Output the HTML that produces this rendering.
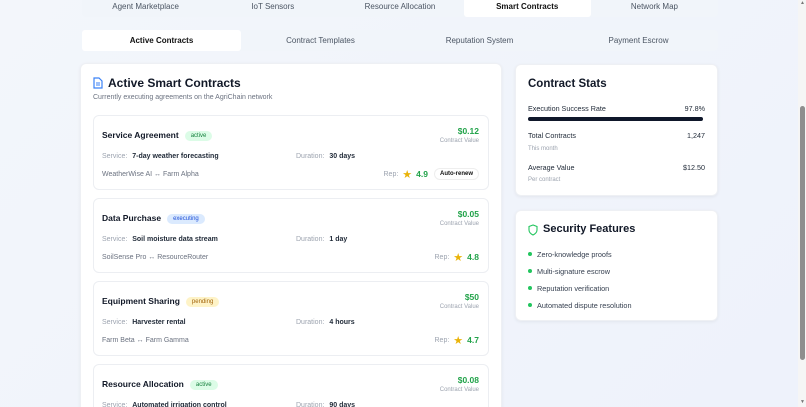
<!DOCTYPE html>
<html style="width:806px;height:407px;overflow:hidden"><head><meta charset="utf-8"><style>
*{box-sizing:border-box;margin:0;padding:0}
body{width:806px;height:407px;overflow:hidden;font-family:"Liberation Sans",sans-serif;background:linear-gradient(135deg,#f3f6fb,#eef2fb);position:relative;color:#111827}
.abs{position:absolute}
.tabs{position:absolute;left:82px;width:636px;background:#f1f5fa;display:flex;border-radius:4px}
.tabs div{flex:1;text-align:center;font-size:8px;color:#4b5563;border-radius:3px}
.tabs div.on{background:#fff;color:#111;font-weight:600}
.card{position:absolute;background:#fff;border-radius:6px;box-shadow:0 1px 3px rgba(0,0,0,.06);border:1px solid #eef0f4}
.cc{position:absolute;left:93px;width:396px;height:75px;background:#fff;border:1px solid #eceef2;border-radius:6px}
.cc .t{position:absolute;left:8px;top:14px;font-size:8.5px;font-weight:600}
.badge{display:inline-block;font-size:6px;padding:2px 6px;border-radius:8px;margin-left:6px;vertical-align:1px;font-weight:500}
.b-a{background:#dcfce7;color:#15803d}.b-e{background:#dbeafe;color:#1d4ed8}.b-p{background:#fef3c7;color:#a16207}
.cc .v{position:absolute;right:9px;top:10px;font-size:8.5px;font-weight:700;color:#22a34a;text-align:right}
.cc .v span{display:block;font-size:6px;color:#9ca3af;font-weight:400;margin-top:2px}
.cc .s{position:absolute;left:8px;top:37px;font-size:7px;color:#9ca3af}
.cc .s b{color:#1f2937;margin-left:3px}
.cc .d{position:absolute;left:202px;top:37px;font-size:7px;color:#9ca3af}
.cc .d b{color:#1f2937;margin-left:3px}
.cc .p{position:absolute;left:8px;top:55px;font-size:7px;color:#6b7280}
.cc .r{position:absolute;right:9px;top:51px;font-size:7px;color:#9ca3af;display:flex;align-items:center;gap:4px;height:14px}
.cc .r .n{color:#22a34a;font-weight:600;font-size:8.5px}
.star{color:#eab308;font-size:11px}
.ar{border:1px solid #eee;border-radius:7px;padding:2px 5px;color:#111;font-weight:600;font-size:6px;margin-left:2px}
.row{position:absolute;left:12px;right:12px;font-size:7.2px;color:#1f2937;display:flex;justify-content:space-between}
.sub{position:absolute;left:12px;font-size:6px;color:#9ca3af}
.li{position:absolute;left:12px;font-size:7.3px;color:#374151}
.li:before{content:"";display:inline-block;width:4px;height:4px;border-radius:50%;background:#22c55e;margin-right:5px;vertical-align:1px}
</style></head><body>
<div class="tabs" style="top:-4px;height:21px;padding:0"><div style="line-height:22px">Agent Marketplace</div><div style="line-height:22px">IoT Sensors</div><div style="line-height:22px">Resource Allocation</div><div class="on" style="line-height:22px">Smart Contracts</div><div style="line-height:22px">Network Map</div></div>
<div class="tabs" style="top:30px;height:21px"><div class="on" style="line-height:21px">Active Contracts</div><div style="line-height:21px">Contract Templates</div><div style="line-height:21px">Reputation System</div><div style="line-height:21px">Payment Escrow</div></div>

<div class="card" style="left:80px;top:63px;width:422px;height:350px"></div>
<svg class="abs" style="left:93px;top:77px" width="10" height="12" viewBox="0 0 10 12"><path d="M1 1h5l3 3v7H1z" fill="none" stroke="#3b82f6" stroke-width="1.2"/><path d="M3 6h4M3 8h4" stroke="#3b82f6" stroke-width="1"/></svg>
<div class="abs" style="left:108px;top:76px;font-size:12px;font-weight:600">Active Smart Contracts</div>
<div class="abs" style="left:93px;top:94px;font-size:7px;color:#6b7280">Currently executing agreements on the AgriChain network</div>

<div class="cc" style="top:115px"><div class="t">Service Agreement<span class="badge b-a">active</span></div><div class="v">$0.12<span>Contract Value</span></div><div class="s">Service: <b>7-day weather forecasting</b></div><div class="d">Duration: <b>30 days</b></div><div class="p">WeatherWise AI ↔ Farm Alpha</div><div class="r">Rep: <span class="star">★</span><span class="n">4.9</span><span class="ar">Auto-renew</span></div></div>
<div class="cc" style="top:198px"><div class="t">Data Purchase<span class="badge b-e">executing</span></div><div class="v">$0.05<span>Contract Value</span></div><div class="s">Service: <b>Soil moisture data stream</b></div><div class="d">Duration: <b>1 day</b></div><div class="p">SoilSense Pro ↔ ResourceRouter</div><div class="r">Rep: <span class="star">★</span><span class="n">4.8</span></div></div>
<div class="cc" style="top:281px"><div class="t">Equipment Sharing<span class="badge b-p">pending</span></div><div class="v">$50<span>Contract Value</span></div><div class="s">Service: <b>Harvester rental</b></div><div class="d">Duration: <b>4 hours</b></div><div class="p">Farm Beta ↔ Farm Gamma</div><div class="r">Rep: <span class="star">★</span><span class="n">4.7</span></div></div>
<div class="cc" style="top:364px;height:50px"><div class="t">Resource Allocation<span class="badge b-a">active</span></div><div class="v">$0.08<span>Contract Value</span></div><div class="s">Service: <b>Automated irrigation control</b></div><div class="d">Duration: <b>90 days</b></div></div>

<div class="card" style="left:515px;top:64px;width:203px;height:132px">
<div class="abs" style="left:12px;top:13px;font-size:11.5px;font-weight:600">Contract Stats</div>
<div class="row" style="top:39px"><span>Execution Success Rate</span><span>97.8%</span></div>
<div class="abs" style="left:12px;top:52px;width:175px;height:4px;background:#0f172a;border-radius:2px"></div>
<div class="row" style="top:66px"><span>Total Contracts</span><span>1,247</span></div>
<div class="sub" style="top:81px">This month</div>
<div class="row" style="top:98px"><span>Average Value</span><span>$12.50</span></div>
<div class="sub" style="top:112px">Per contract</div>
</div>

<div class="card" style="left:515px;top:210px;width:203px;height:111px">
<svg class="abs" style="left:12px;top:13px" width="10" height="12" viewBox="0 0 10 12"><path d="M5 1L1 2.5v3.5c0 2.5 2 4 4 5 2-1 4-2.5 4-5V2.5z" fill="none" stroke="#22c55e" stroke-width="1.1"/></svg>
<div class="abs" style="left:27px;top:12px;font-size:11px;font-weight:600">Security Features</div>
<div class="li" style="top:39px">Zero-knowledge proofs</div>
<div class="li" style="top:56px">Multi-signature escrow</div>
<div class="li" style="top:73px">Reputation verification</div>
<div class="li" style="top:90px">Automated dispute resolution</div>
</div>

<div class="abs" style="left:798px;top:0;width:8px;height:407px;background:#f5f5f5"></div>
<div class="abs" style="left:800px;top:106px;width:5px;height:254px;background:#8e8e8e;border-radius:3px"></div>
<div class="abs" style="left:800px;top:0;font-size:5px;color:#777">▲</div>
<div class="abs" style="left:800px;top:399px;font-size:5px;color:#777">▼</div>
</body></html>
